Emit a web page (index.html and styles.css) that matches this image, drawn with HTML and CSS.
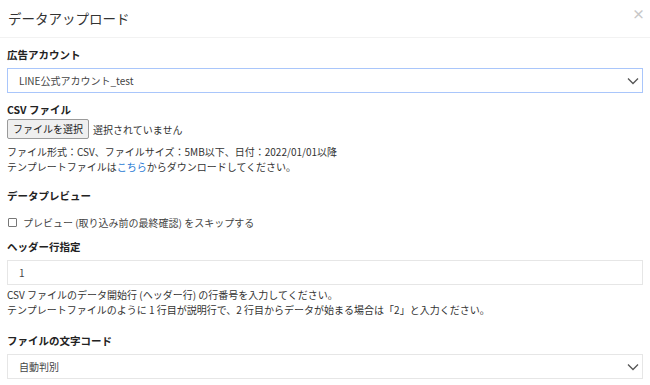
FILE: index.html
```html
<!DOCTYPE html>
<html lang="ja">
<head>
<meta charset="utf-8">
<link rel="stylesheet" href="styles.css">
</head>
<body>
<div class="modal">
  <div class="modal-header">
    <h1 class="title">データアップロード</h1>
    <span class="close">×</span>
  </div>
  <div class="modal-body">
    <div class="group">
      <label class="label">広告アカウント</label>
      <div class="select focused">
        <span>LINE公式アカウント_test</span>
        <svg class="chev" width="12" height="8" viewBox="0 0 12 8"><path d="M1 1.5 L6 6.5 L11 1.5" fill="none" stroke="#555" stroke-width="1.3"/></svg>
      </div>
    </div>
    <div class="group">
      <label class="label">CSV ファイル</label>
      <div class="file-row">
        <span class="file-btn">ファイルを選択</span>
        <span class="file-none">選択されていません</span>
      </div>
      <p class="help">ファイル形式：CSV、ファイルサイズ：5MB以下、日付：2022/01/01以降<br>テンプレートファイルは<a class="link">こちら</a>からダウンロードしてください。</p>
    </div>
    <div class="group preview">
      <label class="label">データプレビュー</label>
      <div class="check-row">
        <span class="checkbox"></span>
        <span>プレビュー (取り込み前の最終確認) をスキップする</span>
      </div>
    </div>
    <div class="group header-row">
      <label class="label">ヘッダー行指定</label>
      <div class="input">1</div>
      <p class="help tight">CSV ファイルのデータ開始行 (ヘッダー行) の行番号を入力してください。<br>テンプレートファイルのように 1 行目が説明行で、2 行目からデータが始まる場合は「2」と入力ください。</p>
    </div>
    <div class="group last">
      <label class="label">ファイルの文字コード</label>
      <div class="select">
        <span>自動判別</span>
        <svg class="chev" width="12" height="8" viewBox="0 0 12 8"><path d="M1 1.5 L6 6.5 L11 1.5" fill="none" stroke="#555" stroke-width="1.3"/></svg>
      </div>
    </div>
  </div>
</div>
</body>
</html>
```
FILE: styles.css
```css
* { box-sizing: border-box; }
html, body { margin: 0; padding: 0; background: #fff; }
body {
  font-family: "Noto Sans CJK JP", "Noto Sans", sans-serif;
  color: #333;
  font-size: 10px;
  overflow: hidden;
}
.modal-header {
  height: 38px;
  border-bottom: 1px solid #f2f2f2;
  display: flex;
  align-items: center;
  justify-content: space-between;
  padding: 0 8px 2px 8px;
}
.title {
  margin: 0;
  font-size: 13.5px;
  font-weight: 400;
  color: #333;
}
.close {
  color: #c8c8c8;
  font-size: 13px;
  font-weight: 700;
  margin-top: -8px;
  margin-right: -3px;
}
.modal-body { padding: 9px 7px 0 7px; }
.label {
  display: block;
  font-weight: 700;
  font-size: 10.5px;
  line-height: 16px;
  margin-bottom: 5px;
  color: #222;
}
.group { margin-bottom: 9px; }
.select, .input {
  height: 25px;
  border: 1px solid #e6e6e6;
  display: flex;
  align-items: center;
  justify-content: space-between;
  padding: 0 3px 0 11px;
  font-size: 10px;
  color: #444;
}
.select.focused { border-color: #a9c6fb; }
.chev { display: block; }
.file-row {
  display: flex;
  align-items: center;
  gap: 4px;
  margin-top: -4px;
}
.file-btn {
  display: inline-block;
  height: 20px;
  line-height: 18px;
  padding: 0 5px;
  border: 1px solid #9a9a9a;
  border-radius: 2px;
  background: #efefef;
  font-size: 10px;
  color: #222;
}
.file-none { font-size: 10px; color: #333; }
.help {
  margin: 5px 0 0 0;
  font-size: 10px;
  line-height: 15px;
  color: #333;
}
.help.tight { margin-top: 2px; }
.link { color: #2a7bd4; }
.preview { margin-top: 14px; }
.header-row { margin-top: 9px; margin-bottom: 16px; }
.check-row {
  display: flex;
  align-items: center;
  gap: 6px;
  margin-top: 11px;
  font-size: 10px;
  color: #444;
}
.checkbox {
  width: 9px;
  height: 9px;
  border: 1px solid #777;
  border-radius: 1px;
  margin-left: 1px;
}
```
